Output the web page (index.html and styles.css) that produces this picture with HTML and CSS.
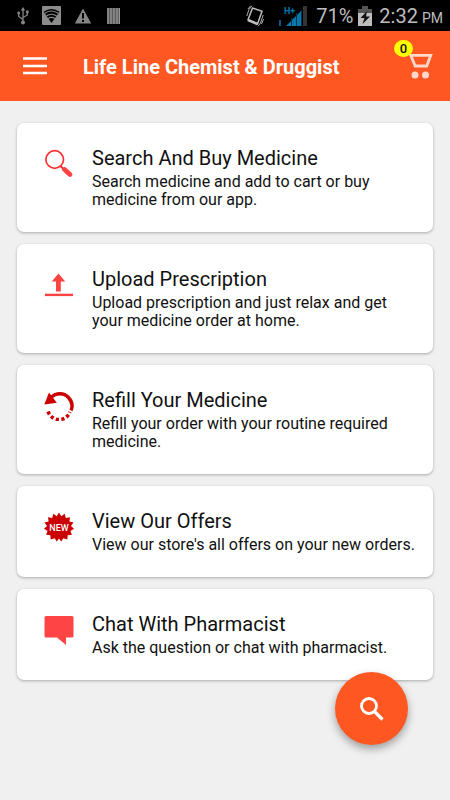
FILE: index.html
```html
<!DOCTYPE html>
<html lang="en">
<head>
    <meta charset="UTF-8">
    <meta name="viewport" content="width=device-width, initial-scale=1.0">
    <title>Life Line Chemist &amp; Druggist</title>
    <link rel="stylesheet" href="styles.css">
</head>
<body>
    <div class="status-bar">
        <div class="status-left">
            <svg width="12" height="18" viewBox="0 0 12 18" fill="none" stroke="#858585" stroke-width="1.3">
                <path d="M6 2v13M6 12.500L1.700 9.500V6M6 10.500l4.300-2.500V5"/>
                <path d="M6 0l2.200 3.500H3.800z" fill="#858585" stroke="none"/>
                <circle cx="6" cy="15.500" r="2" fill="#858585" stroke="none"/>
                <circle cx="1.700" cy="6" r="1.400" fill="#858585" stroke="none"/>
                <path d="M9 3.500h2.600v2.600H9z" fill="#858585" stroke="none"/>
            </svg>
            <svg width="19" height="19" viewBox="0 0 19 19">
                <rect width="19" height="19" rx="1" fill="#8c8c8c"/>
                <path d="M1.500 5.800Q9.500 .2 17.500 5.800L9.500 17z" fill="#000"/>
                <path d="M2.500 7.500Q9.500 2.500 16.500 7.500M4.400 10Q9.500 6.500 14.600 10M6.200 12.500Q9.500 10.200 12.800 12.500" fill="none" stroke="#8c8c8c" stroke-width="1.100"/>
            </svg>
            <svg width="18" height="16" viewBox="0 0 18 16">
                <path d="M9 .5L17.200 15.500H.8z" fill="#858585"/>
                <path d="M9 5v5.500M9 12v2" stroke="#000" stroke-width="2"/>
            </svg>
            <svg class="barcode" width="13" height="16" viewBox="0 0 13 16">
                <path d="M0 0h13v16H0z" fill="#5c5c5c"/>
                <path d="M1 0v16M4 0v16M7 0v16M10 0v16M12.500 0v16" stroke="#969696" stroke-width="1.300"/>
            </svg>
        </div>
        <div class="status-right">
            <svg width="18" height="22" viewBox="0 0 18 22" fill="none" stroke="#bdbdbd">
                <path d="M6.500 3L16 6.200 11.500 19 2 14.800z" stroke-width="1.500" stroke-linejoin="round"/>
                <path d="M2 15l9.500 4" stroke-width="2.500"/>
                <path d="M6 .8L3 4.500.8 11M4.500.8L2 4M17.200 10l-2.700 8-2.500 3.300M17.500 14l-2 5" stroke-width=".9"/>
            </svg>
            <svg class="signal" width="28" height="20" viewBox="0 0 28 20">
                <path d="M0 14h2v6H0z" fill="#075b84"/>
                <path d="M24 0h4v20h-4z" fill="#343434"/>
                <path d="M7 20L23 4v16z" fill="#0877ad"/>
                <path d="M12.500 12v8M17.500 7v13M22.500 4v16" stroke="#003047"/>
                <text class="network" x="5" y="8">H+</text>
            </svg>
            <span>71%</span>
            <svg width="14" height="20" viewBox="0 0 14 20">
                <path d="M4 0h6v3h4v17H0V3h4z" fill="#555"/>
                <path d="M0 7h14v13H0z" fill="#bdbdbd"/>
                <path d="M9 5L2.500 12h4L4.500 18 12 10.500H8z" fill="#111"/>
            </svg>
            <span class="clock">2:32<small>PM</small></span>
        </div>
    </div>

    <header>
        <button class="menu-button" type="button" aria-label="Menu">
            <svg width="24" height="18" viewBox="0 0 24 18">
                <path d="M0 1.500h24M0 9h24M0 16h24" stroke="#fff" stroke-width="2.700"/>
            </svg>
        </button>
        <h1>Life Line Chemist &amp; Druggist</h1>
        <button class="cart-button" type="button" aria-label="Cart">
            <svg width="26" height="26" viewBox="0 0 26 26" fill="none" stroke="#ffd8cb">
                <path d="M3.800 2.300H23.700L19.800 13H8.200z" stroke-width="2.800"/>
                <circle cx="8" cy="22" r="3.500" fill="#ffd8cb" stroke="none"/>
                <circle cx="18.500" cy="22" r="3.500" fill="#ffd8cb" stroke="none"/>
            </svg>
            <span class="badge">0</span>
        </button>
    </header>

    <main>
        <a class="card" href="#search">
            <svg width="30" height="30" viewBox="0 0 30 30">
                <circle cx="10.700" cy="10.500" r="8.800" fill="none" stroke="#fb3033" stroke-width="1.700"/>
                <path d="M16.500 17l4 4" stroke="#fb3033" stroke-width="2"/>
                <path d="M20.500 20.500l5.500 5" stroke="#fe4141" stroke-width="4.800" stroke-linecap="round"/>
            </svg>
            <div>
                <h2>Search And Buy Medicine</h2>
                <p>Search medicine and add to cart or buy medicine from our app.</p>
            </div>
        </a>
        <a class="card" href="#upload">
            <svg width="30" height="30" viewBox="0 0 30 30" fill="#fe4141">
                <path d="M14.500 3.500l6.700 8h-4.400v10H12v-10H7.800z"/>
                <path d="M1 23.700h28v2.400H1z"/>
            </svg>
            <div>
                <h2>Upload Prescription</h2>
                <p>Upload prescription and just relax and get your medicine order at home.</p>
            </div>
        </a>
        <a class="card" href="#refill">
            <svg width="30" height="30" viewBox="0 0 30 30">
                <path d="M7 6.500C12 1.500 20 1.500 24.500 6.500c3.800 4.300 4.300 9 2.500 13" fill="none" stroke="#cb0000" stroke-width="3.400"/>
                <path d="M5 1.500L.3 13.500l12.500-1.800z" fill="#cb0000"/>
                <path d="M4 20.500C8.500 31.500 22 31 26 21" fill="none" stroke="#cb0000" stroke-width="3.600" stroke-dasharray="3.200 2.400"/>
            </svg>
            <div>
                <h2>Refill Your Medicine</h2>
                <p>Refill your order with your routine required medicine.</p>
            </div>
        </a>
        <a class="card" href="#offers">
            <svg width="30" height="30" viewBox="0 0 30 30">
                <path d="M15 .5l2.300 3.700L20.700 1.800l1.100 4.100 4.200-.6-.6 4.200 4.100 1.100L27 14l3 2.800-3.500 2.100 1.400 3.900-4.200.5-.4 4.300-4-1.300L17.300 29.500 15 26.500 12.700 29.500l-2-3.200-4 1.300-.4-4.300-4.200-.5 1.400-3.900L0 16.800 3 14 .5 10.600l4.100-1.100L4 5.300l4.200.6L9.300 1.800l3.400 2.400z" fill="#cb0000"/>
                <text class="new-label" x="15" y="19">NEW</text>
            </svg>
            <div>
                <h2>View Our Offers</h2>
                <p>View our store's all offers on your new orders.</p>
            </div>
        </a>
        <a class="card" href="#chat">
            <svg width="30" height="30" viewBox="0 0 30 30" fill="#fe4444">
                <path d="M2 1h26q1.500 0 1.500 1.500V21q0 1.500-1.500 1.500h-6V30l-9-7.500H2Q.5 22.500.5 21V2.500Q.5 1 2 1z"/>
            </svg>
            <div>
                <h2>Chat With Pharmacist</h2>
                <p>Ask the question or chat with pharmacist.</p>
            </div>
        </a>
    </main>

    <button class="search-button" type="button" aria-label="Search">
        <svg width="26" height="26" viewBox="0 0 26 26" fill="none" stroke="#fff">
            <circle cx="10" cy="10" r="7.500" stroke-width="2.800"/>
            <path d="M15.500 15.500l8 8" stroke-width="3.200"/>
        </svg>
    </button>
</body>
</html>
```
FILE: styles.css
```css
body {
    font-family: Roboto, sans-serif;
    background-color: #f0f0f0;
    color: #111;
    margin: 0;
}

button {
    border: 0;
    padding: 0;
    background: none;
    cursor: pointer;
}

svg {
    display: block;
    flex-shrink: 0;
}

.status-bar {
    display: flex;
    justify-content: space-between;
    align-items: center;
    height: 31px;
    padding: 0 7px 0 17px;
    background-color: #000;
    color: #bdbdbd;
}

.status-left, .status-right {
    display: flex;
    align-items: center;
}

.status-left {
    gap: 13px;
}

.barcode {
    margin-left: 2px;
}

.status-right {
    gap: 5px;
    font-size: 20px;
}

.signal {
    margin: 0 4px 0 10px;
}

.network {
    font-size: 9px;
    font-weight: bold;
    fill: #0877ad;
}

.clock {
    margin-left: 2px;
}

.clock small {
    margin-left: 4px;
    font-size: 14px;
}

header {
    display: flex;
    align-items: center;
    height: 70px;
    padding: 0 17px 0 23px;
    background-color: #ff5722;
    color: white;
}

h1 {
    flex: 1;
    margin: 2px 0 0 36px;
    font-size: 20px;
    font-weight: bold;
}

.cart-button {
    position: relative;
}

.badge {
    position: absolute;
    top: -13px;
    left: -13px;
    width: 19px;
    height: 17px;
    border-radius: 50%;
    background-color: #ffff00;
    color: #111;
    font: 500 13px/17px Roboto, sans-serif;
    text-align: center;
}

main {
    display: flex;
    flex-direction: column;
    gap: 12px;
    padding: 22px 17px;
}

.card {
    display: flex;
    align-items: flex-start;
    gap: 18px;
    padding: 23px 16px 23px 27px;
    background-color: white;
    border-radius: 7px;
    box-shadow: 0 1px 3px rgba(0, 0, 0, 0.3);
    color: #111;
    text-decoration: none;
}

.card svg {
    margin-top: 3px;
}

h2 {
    margin: 0 0 3px;
    font-size: 20px;
    font-weight: normal;
    line-height: 24px;
}

p {
    margin: 0;
    font-size: 16px;
    line-height: 18px;
}

.new-label {
    font-size: 9px;
    font-weight: 500;
    fill: white;
    text-anchor: middle;
}

.search-button {
    position: fixed;
    right: 42px;
    bottom: 55px;
    display: flex;
    align-items: center;
    justify-content: center;
    width: 73px;
    height: 73px;
    border-radius: 50%;
    background-color: #ff5722;
    box-shadow: 0 4px 9px rgba(0, 0, 0, 0.35);
}
```
